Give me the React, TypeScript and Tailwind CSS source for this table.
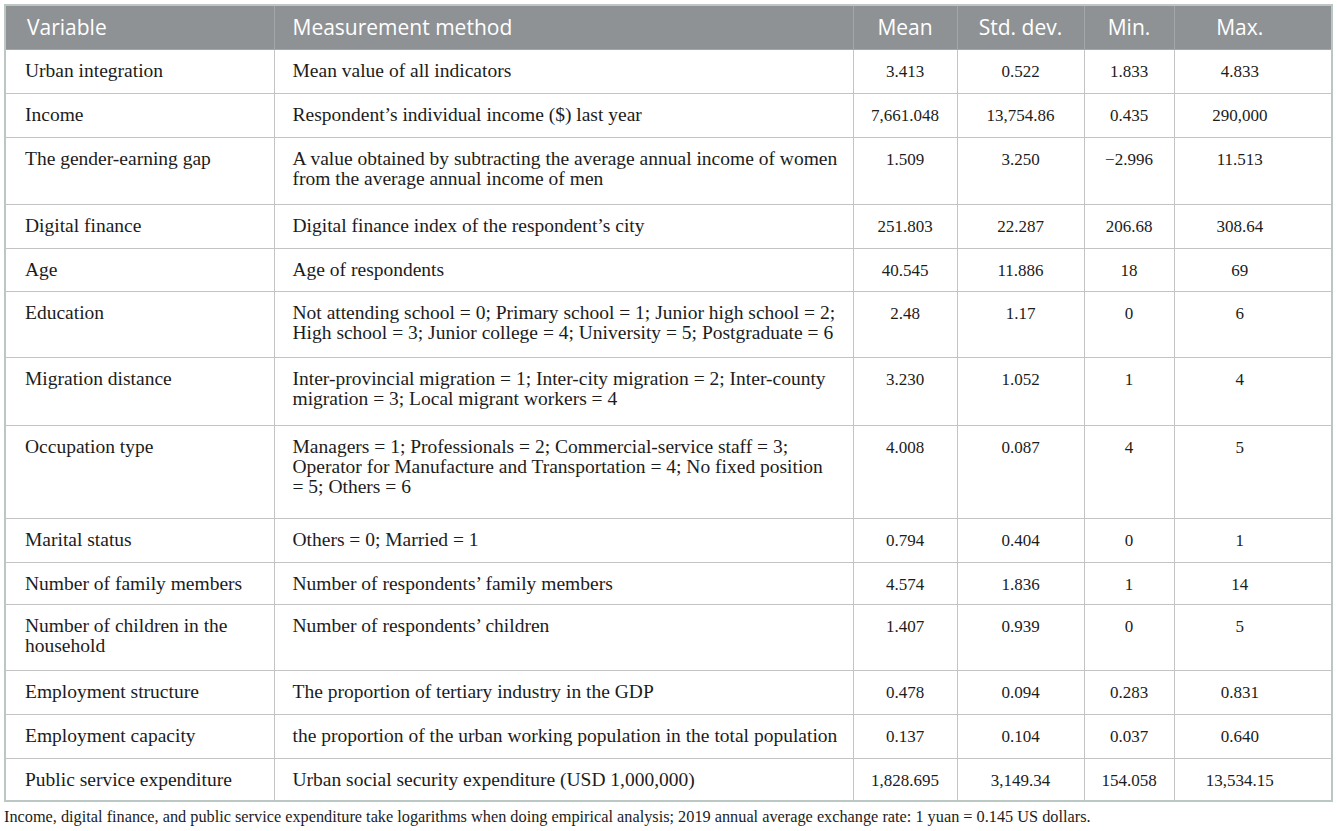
type Row = {
  variable: string[]
  method: string[]
  mean: string
  sd: string
  min: string
  max: string
  h: string
}

const rows: Row[] = [
  { variable: ['Urban integration'], method: ['Mean value of all indicators'], mean: '3.413', sd: '0.522', min: '1.833', max: '4.833', h: 'h-[44px]' },
  { variable: ['Income'], method: ['Respondent\u2019s individual income ($) last year'], mean: '7,661.048', sd: '13,754.86', min: '0.435', max: '290,000', h: 'h-[44px]' },
  {
    variable: ['The gender-earning gap'],
    method: ['A value obtained by subtracting the average annual income of women', 'from the average annual income of men'],
    mean: '1.509', sd: '3.250', min: '\u22122.996', max: '11.513', h: 'h-[67px]',
  },
  { variable: ['Digital finance'], method: ['Digital finance index of the respondent\u2019s city'], mean: '251.803', sd: '22.287', min: '206.68', max: '308.64', h: 'h-[44px]' },
  { variable: ['Age'], method: ['Age of respondents'], mean: '40.545', sd: '11.886', min: '18', max: '69', h: 'h-[43px]' },
  {
    variable: ['Education'],
    method: ['Not attending school = 0; Primary school = 1; Junior high school = 2;', 'High school = 3; Junior college = 4; University = 5; Postgraduate = 6'],
    mean: '2.48', sd: '1.17', min: '0', max: '6', h: 'h-[66px]',
  },
  {
    variable: ['Migration distance'],
    method: ['Inter-provincial migration = 1; Inter-city migration = 2; Inter-county', 'migration = 3; Local migrant workers = 4'],
    mean: '3.230', sd: '1.052', min: '1', max: '4', h: 'h-[68px]',
  },
  {
    variable: ['Occupation type'],
    method: ['Managers = 1; Professionals = 2; Commercial-service staff = 3;', 'Operator for Manufacture and Transportation = 4; No fixed position', '= 5; Others = 6'],
    mean: '4.008', sd: '0.087', min: '4', max: '5', h: 'h-[93px]',
  },
  { variable: ['Marital status'], method: ['Others = 0; Married = 1'], mean: '0.794', sd: '0.404', min: '0', max: '1', h: 'h-[44px]' },
  { variable: ['Number of family members'], method: ['Number of respondents\u2019 family members'], mean: '4.574', sd: '1.836', min: '1', max: '14', h: 'h-[42px]' },
  {
    variable: ['Number of children in the', 'household'],
    method: ['Number of respondents\u2019 children'],
    mean: '1.407', sd: '0.939', min: '0', max: '5', h: 'h-[66px]',
  },
  { variable: ['Employment structure'], method: ['The proportion of tertiary industry in the GDP'], mean: '0.478', sd: '0.094', min: '0.283', max: '0.831', h: 'h-[44px]' },
  { variable: ['Employment capacity'], method: ['the proportion of the urban working population in the total population'], mean: '0.137', sd: '0.104', min: '0.037', max: '0.640', h: 'h-[44px]' },
  { variable: ['Public service expenditure'], method: ['Urban social security expenditure (USD 1,000,000)'], mean: '1,828.695', sd: '3,149.34', min: '154.058', max: '13,534.15', h: 'h-[43px]' },
]

function Lines({ lines }: { lines: string[] }) {
  return (
    <>
      {lines.map((l, i) => (
        <div key={i} className="whitespace-nowrap">{l}</div>
      ))}
    </>
  )
}

export default function App() {
  const textCell = "align-top border border-[#c4c4c4] pt-[11px] text-[19.5px] leading-[20px] text-[#1c1c1c] font-['Liberation_Serif',serif]"
  const numCell = "align-top border border-[#c4c4c4] pt-[12px] text-center text-[17px] leading-[20px] text-[#1c1c1c] font-['Liberation_Serif',serif]"

  return (
    <div className="bg-white w-[1337px] h-[831px] pt-[4px] pl-[4px]">
      <table className="table-fixed border-collapse border-2 border-[#bac7c3] w-[1327px]">
        <colgroup>
          <col className="w-[269px]" />
          <col className="w-[579px]" />
          <col className="w-[104px]" />
          <col className="w-[127px]" />
          <col className="w-[90px]" />
          <col className="w-[158px]" />
        </colgroup>
        <thead>
          <tr className="h-[44px] bg-[#8e9295] text-white text-[21px] font-['Open_Sans',sans-serif] font-normal">
            <th className="text-left font-normal pl-[21px] border border-[#a3a7a9]">Variable</th>
            <th className="text-left font-normal pl-[18px] border border-[#a3a7a9]">Measurement method</th>
            <th className="font-normal border border-[#a3a7a9]">Mean</th>
            <th className="font-normal border border-[#a3a7a9]">Std. dev.</th>
            <th className="font-normal border border-[#a3a7a9]">Min.</th>
            <th className="font-normal pr-[26px] border border-[#a3a7a9]">Max.</th>
          </tr>
        </thead>
        <tbody>
          {rows.map((r, i) => (
            <tr key={i} className={r.h}>
              <td className={`${textCell} pl-[19px]`}><Lines lines={r.variable} /></td>
              <td className={`${textCell} pl-[18px]`}><Lines lines={r.method} /></td>
              <td className={numCell}>{r.mean}</td>
              <td className={numCell}>{r.sd}</td>
              <td className={numCell}>{r.min}</td>
              <td className={`${numCell} pr-[26px]`}>{r.max}</td>
            </tr>
          ))}
        </tbody>
      </table>
      <p className="mt-[5px] text-[16.3px] leading-[20px] text-[#1c1c1c] font-['Liberation_Serif',serif] whitespace-nowrap">
        Income, digital finance, and public service expenditure take logarithms when doing empirical analysis; 2019 annual average exchange rate: 1 yuan = 0.145 US dollars.
      </p>
    </div>
  )
}
